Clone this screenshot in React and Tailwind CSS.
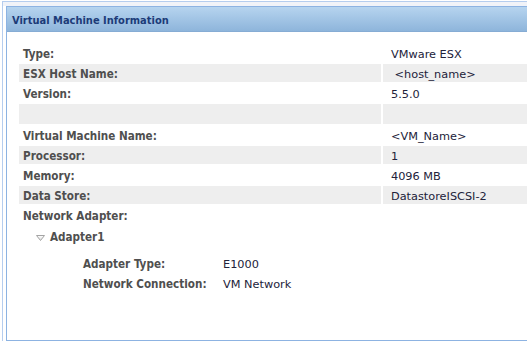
export default function App() {
  const font = { fontFamily: '"DejaVu Sans Condensed", "DejaVu Sans", sans-serif' };
  const vfont = { fontFamily: '"DejaVu Sans", sans-serif' };
  const rows = [
    { label: "Type:", value: "VMware ESX", gray: false },
    { label: "ESX Host Name:", value: "\u00a0<host_name>", gray: true },
    { label: "Version:", value: "5.5.0", gray: false },
    { label: "", value: "", gray: true, tall: true },
    { label: "Virtual Machine Name:", value: "<VM_Name>", gray: false },
    { label: "Processor:", value: "1", gray: true },
    { label: "Memory:", value: "4096 MB", gray: false },
    { label: "Data Store:", value: "DatastoreISCSI-2", gray: true },
  ];
  return (
    <div className="w-[527px] h-[341px] overflow-hidden bg-white pt-px pl-[2px]" style={font}>
      <div className="h-[340px] border-l border-t border-[#b5cdee] flex flex-col">
        <div className="h-[4px] bg-[#f1f3f8] shrink-0"></div>
        <div className="pl-[3px] flex-1 flex">
          <div className="w-[580px] shrink-0 h-[335px] border-l border-t border-b border-[#8db3e2] flex flex-col bg-white">
            <div className="h-[25px] shrink-0 bg-gradient-to-b from-[#b6d4ef] to-[#8eb5db] border-b border-[#86acd4] flex items-center pl-[5px] pt-[2px]">
              <span className="text-[11px] font-bold text-[#1c3b78] leading-none">Virtual Machine Information</span>
            </div>
            <div className="pt-[12px] pl-[12px] flex flex-col">
              <div className="flex flex-col gap-[2px]">
                {rows.map((r, i) => (
                  <div key={i} className={`flex ${r.tall ? "h-[20px]" : "h-[18px]"}`}>
                    <div className={`w-[362px] shrink-0 flex items-center pl-[4px] pt-[4px] text-[11.6px] font-bold text-[#4f4f4f] ${r.gray ? "bg-[#eeeeee]" : "bg-white"}`}>
                      {r.label}
                    </div>
                    <div style={vfont} className={`ml-[2px] flex-1 flex items-center pl-[8px] pt-[4px] text-[11.3px] text-[#22223a] whitespace-pre ${r.gray ? "bg-[#eeeeee]" : "bg-white"}`}>
                      {r.value}
                    </div>
                  </div>
                ))}
                <div className="h-[18px] flex items-center pl-[4px] pt-[4px] text-[11.6px] font-bold text-[#4f4f4f]">Network Adapter:</div>
              </div>
              <div className="mt-[4px] h-[18px] flex items-center pl-[17px] pt-[2px] gap-[5px]">
                <svg width="9" height="6" viewBox="0 0 9 6">
                  <defs>
                    <linearGradient id="tg" x1="0" y1="0" x2="0" y2="1">
                      <stop offset="0" stopColor="#ffffff" />
                      <stop offset="1" stopColor="#dcdcdc" />
                    </linearGradient>
                  </defs>
                  <polygon points="0.5,0.5 8.5,0.5 4.5,5.5" fill="url(#tg)" stroke="#a4a4a4" strokeWidth="1" />
                </svg>
                <span className="text-[11.6px] font-bold text-[#4f4f4f]">Adapter1</span>
              </div>
              <div className="mt-[8px] pl-[64px] flex flex-col gap-[2px]">
                <div className="h-[18px] flex items-center pt-[4px]">
                  <span className="w-[140px] shrink-0 text-[11.6px] font-bold text-[#4f4f4f]">Adapter Type:</span>
                  <span style={vfont} className="text-[11.3px] text-[#22223a]">E1000</span>
                </div>
                <div className="h-[18px] flex items-center pt-[4px]">
                  <span className="w-[140px] shrink-0 text-[11.6px] font-bold text-[#4f4f4f]">Network Connection:</span>
                  <span style={vfont} className="text-[11.3px] text-[#22223a]">VM Network</span>
                </div>
              </div>
            </div>
          </div>
        </div>
      </div>
    </div>
  );
}
